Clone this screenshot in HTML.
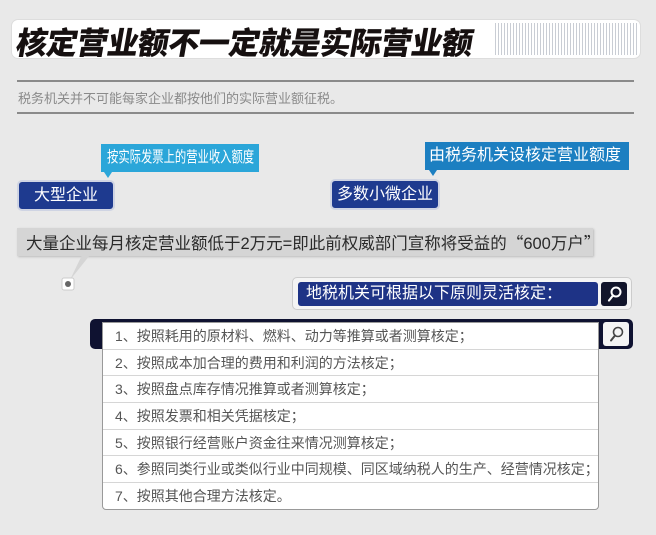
<!DOCTYPE html><html><head><meta charset="utf-8"><style>
*{margin:0;padding:0;box-sizing:border-box}
body{width:656px;height:535px;background:#e9e9e9;position:relative;overflow:hidden;font-family:"Liberation Sans","Noto Sans CJK SC",sans-serif}
.a{position:absolute}
.q{font-family:"Noto Sans CJK SC",sans-serif}
.t{left:11px;top:19px;width:630px;height:40px;background:#fff;border-radius:7px;border:1px solid #ddd}
.title{left:17px;top:18px;font-size:31px;font-weight:900;color:#161010;transform:skewX(-10deg);letter-spacing:-0.6px;white-space:nowrap}
.stripe{left:495px;top:23px;width:143px;height:32px;background:repeating-linear-gradient(90deg,#c9cdd4 0 1px,#fff 1px 3px)}
.line{left:17px;width:617px;height:2px;background:#8a8a8a}
.sub{left:18px;top:88px;font-size:13px;color:#8a8a8a}
.cb{color:#fff;font-size:16px;line-height:28px;white-space:nowrap}
.blue{background:#1e3a8f;border:2px solid #cfd4e3;border-radius:5px;text-align:center}
.row{height:26.7px;border-bottom:1px solid #d6d6d6;font-size:14px;color:#555;line-height:26px;padding-left:12px;white-space:nowrap}
</style></head><body>
<div class="a t"></div>
<div class="a stripe"></div>
<div class="a title">核定营业额不一定就是实际营业额</div>
<div class="a line" style="top:80px"></div>
<div class="a sub">税务机关并不可能每家企业都按他们的实际营业额征税。</div>
<div class="a line" style="top:112px"></div>

<div class="a cb" style="left:101px;top:144px;width:158px;height:28px;background:#2ba6d9;overflow:hidden"><span style="display:inline-block;font-size:15.5px;transform:scaleX(0.73);transform-origin:0 50%;margin-left:6px">按实际发票上的营业收入额度</span></div>
<div class="a" style="left:104px;top:172px;width:0;height:0;border-left:4px solid transparent;border-right:4px solid transparent;border-top:6px solid #2ba6d9"></div>
<div class="a cb blue" style="left:17px;top:180px;width:98px;height:31px">大型企业</div>

<div class="a cb" style="left:425px;top:142px;width:204px;background:#1c7fc1;padding-left:4px">由税务机关设核定营业额度</div>
<div class="a" style="left:429px;top:170px;width:0;height:0;border-left:4px solid transparent;border-right:4px solid transparent;border-top:6px solid #1c7fc1"></div>
<div class="a cb blue" style="left:330px;top:179px;width:110px;height:31px">多数小微企业</div>

<div class="a" style="left:17px;top:228px;width:576px;height:28px;background:#d5d5d5;box-shadow:1px 1px 2px #bbb;font-size:16.5px;line-height:28px;color:#2a2a2a;padding-left:9px;white-space:nowrap">大量企业每月核定营业额低于2万元=即此前权威部门宣称将受益的<span class="q">“</span>600万户<span class="q">”</span></div>
<svg class="a" style="left:60px;top:255px" width="30" height="40"><polygon points="22,0 30,0 10,25" fill="#d5d5d5"/><rect x="2" y="23" width="12" height="12" rx="2" fill="#fff" stroke="#ccc"/><circle cx="8" cy="29" r="3" fill="#666"/></svg>

<div class="a" style="left:292px;top:277px;width:340px;height:33px;border:1px solid #ccc;border-radius:5px;background:#f4f4f4"></div>
<div class="a cb" style="left:298px;top:282px;width:300px;height:24px;line-height:24px;background:#1e3386;border-radius:3px;padding-left:8px;font-size:16px">地税机关可根据以下原则灵活核定：</div>
<div class="a" style="left:601px;top:282px;width:26px;height:24px;background:#12152b;border-radius:3px"><svg width="26" height="24"><circle cx="15" cy="10" r="4.5" fill="none" stroke="#fff" stroke-width="2"/><line x1="12" y1="13.5" x2="8" y2="18.5" stroke="#fff" stroke-width="2.2" stroke-linecap="round"/></svg></div>

<div class="a" style="left:90px;top:319px;width:543px;height:30px;background:#0f1231;border-radius:5px"></div>
<div class="a" style="left:603px;top:322px;width:26px;height:24px;background:#f4f4f4;border-radius:3px"><svg width="26" height="24"><circle cx="15" cy="10" r="4.5" fill="none" stroke="#444" stroke-width="1.6"/><line x1="12" y1="13.5" x2="8" y2="18.5" stroke="#444" stroke-width="2" stroke-linecap="round"/></svg></div>
<div class="a" style="left:102px;top:322px;width:497px;height:188px;background:#fff;border:1px solid #999;border-radius:0 0 4px 4px;overflow:hidden">
<div class="row">1、按照耗用的原材料、燃料、动力等推算或者测算核定；</div>
<div class="row">2、按照成本加合理的费用和利润的方法核定；</div>
<div class="row">3、按照盘点库存情况推算或者测算核定；</div>
<div class="row">4、按照发票和相关凭据核定；</div>
<div class="row">5、按照银行经营账户资金往来情况测算核定；</div>
<div class="row">6、参照同类行业或类似行业中同规模、同区域纳税人的生产、经营情况核定；</div>
<div class="row" style="border:0">7、按照其他合理方法核定。</div>
</div>
</body></html>
